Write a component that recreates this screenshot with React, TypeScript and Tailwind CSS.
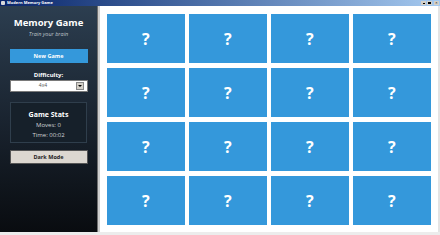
import React from "react";

const cards = Array.from({ length: 16 }, (_, i) => i);

function TitleBar() {
  return (
    <div className="flex h-[6px] items-center bg-gradient-to-r from-[#0a246a] to-[#a6caf0] pl-[1px] pr-[1px]">
      <div className="h-[4px] w-[4px] rounded-[1px] bg-[#d8d8d8]" />
      <span className="ml-[2px] text-[4px] font-bold leading-none text-white">Modern Memory Game</span>
      <div className="ml-auto flex gap-[1px]">
        <div className="flex h-[4px] w-[5px] items-end justify-center bg-[#d4d0c8] pb-[1px]">
          <div className="h-[1px] w-[2px] bg-black" />
        </div>
        <div className="flex h-[4px] w-[5px] items-center justify-center bg-[#d4d0c8]">
          <div className="h-[2px] w-[3px] border border-black" />
        </div>
        <div className="ml-[1px] flex h-[4px] w-[5px] items-center justify-center bg-[#d4d0c8] text-[4px] leading-none text-black">
          ×
        </div>
      </div>
    </div>
  );
}

function Sidebar() {
  return (
    <aside className="flex w-[97px] flex-col items-center bg-gradient-to-b from-[#2c3e50] via-[#1a2430] to-[#090c10] text-white">
      <h1 className="mt-[11px] text-[9.5px] font-bold leading-[12px]">Memory Game</h1>
      <p className="mt-[2px] text-[5.5px] italic leading-[7px] text-[#bdc3c7]">Train your brain</p>
      <button className="mt-[11px] h-[14px] w-[78px] bg-[#3498db] text-[5.5px] font-bold text-white">New Game</button>
      <p className="mt-[8px] text-[6px] font-bold leading-[8px]">Difficulty:</p>
      <div className="mt-[1px] flex h-[12px] w-[78px] items-center border border-[#7a7a7a] bg-white pr-[3px]">
        <span className="flex-1 text-center text-[5px] text-[#555]">4x4</span>
        <div className="flex h-[8px] w-[8px] items-center justify-center border border-[#888] bg-[#d4d0c8]">
          <div className="h-0 w-0 border-x-[2px] border-t-[2px] border-x-transparent border-t-black" />
        </div>
      </div>
      <div className="mt-[10px] flex h-[41px] w-[77px] flex-col items-center border border-[#2f3e4c] bg-[#16202a]">
        <p className="mt-[7px] text-[7px] font-bold leading-[9px]">Game Stats</p>
        <p className="mt-[2px] text-[6px] leading-[8px] text-[#d0d3d6]">Moves: 0</p>
        <p className="mt-[2px] text-[6px] leading-[8px] text-[#d0d3d6]">Time: 00:02</p>
      </div>
      <button className="mt-[7px] h-[14px] w-[78px] border border-[#555] bg-[#dcd7d0] text-[5.5px] font-bold text-[#222]">
        Dark Mode
      </button>
    </aside>
  );
}

export default function App() {
  return (
    <div
      className="flex h-[235px] w-[440px] flex-col overflow-hidden bg-[#ececec]"
      style={{ fontFamily: '"Open Sans", "Noto Sans", sans-serif' }}
    >
      <TitleBar />
      <div className="flex h-[226px]">
        <Sidebar />
        <div className="w-[1px] bg-[#6f6f6f]" />
        <div className="w-[2px] bg-[#cfcfcf]" />
        <main className="grid flex-1 grid-cols-4 grid-rows-4 gap-x-[4.5px] gap-y-[5px] bg-white pb-[7px] pl-[7px] pr-[7.5px] pt-[8px]">
          {cards.map((i) => (
            <div key={i} className="flex items-center justify-center bg-[#3498db]">
              <span className="text-[16px] font-bold leading-none text-white">?</span>
            </div>
          ))}
        </main>
        <div className="w-[2px] bg-[#e4e4e4]" />
      </div>
    </div>
  );
}
